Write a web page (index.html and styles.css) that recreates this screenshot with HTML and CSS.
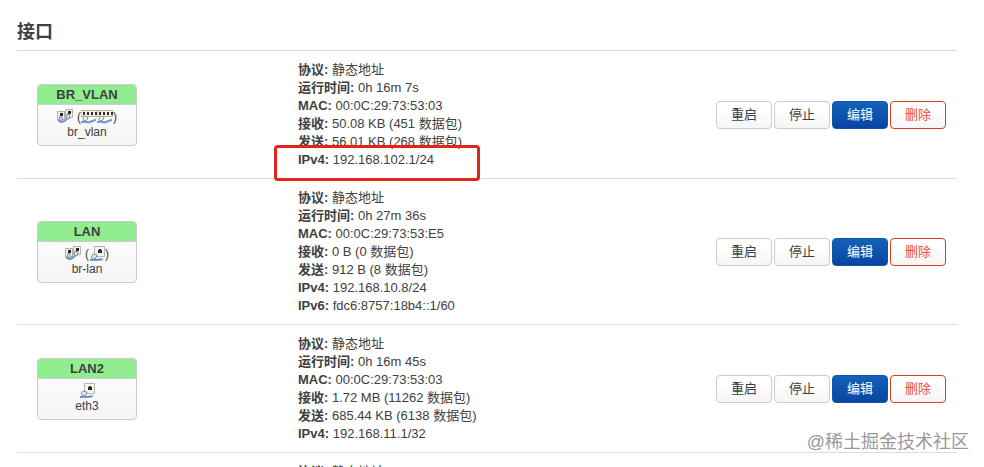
FILE: index.html
```html
<!DOCTYPE html>
<html lang="zh-CN">
<head>
<meta charset="utf-8">
<title>接口</title>
<link rel="stylesheet" href="styles.css">
</head>
<body>
<svg class="sprite" aria-hidden="true">
  <symbol id="port" viewBox="0 0 16 16">
    <path d="M5.500.5h10v10h-10z" fill="#f7f5f0" stroke="#b5b3ae"/>
    <path d="M9 4h1V3h2v1h1v3H9z" fill="#2b2927"/>
    <path d="M1 14c4-1 8 1 13-1" fill="none" stroke="#84add8" stroke-width="2"/>
    <path d="M1 14c4-1 7 1 11-1" fill="none" stroke="#4779b0"/>
    <path d="M4 8l4 1-1 3-3 1-2-2z" fill="#e4e8eb" stroke="#8b9299"/>
  </symbol>
  <symbol id="bridge" viewBox="0 0 16 16">
    <path d="M8.500.5h7v8h-7z" fill="#f2f0e9" stroke="#b3b0a9"/>
    <path d="M.5 2.500h7v8h-7z" fill="#f2f0e9" stroke="#b3b0a9"/>
    <path d="M11 2h3v3h-3zM3 4h3v3H3z" fill="#292724"/>
    <path d="M1 11c3 4 8 1 10-3" fill="none" stroke="#6d9bd0" stroke-width="2"/>
    <path d="M3 7l2 1v3l-3 1zM10 5l3 1-1 4-3-1z" fill="#e2e6e8" stroke="#858b91"/>
  </symbol>
  <symbol id="switch" viewBox="0 0 16 16">
    <path d="M0 1.500h16v6H0z" fill="#f6f2df" stroke="#b8b3a1"/>
    <path d="M2 3h2v3H2zM6 3h2v3H6zM10 3h2v3h-2zM14 3h2v3h-2z" fill="#302e29"/>
    <path d="M0 13c5-1 6 1 9 0s4-2 6-2" fill="none" stroke="#6599d2" stroke-width="2"/>
    <path d="M3 7l4 1-1 3-3 1-1-2z" fill="#f4f4ef" stroke="#92989d"/>
  </symbol>
</svg>
<main class="page">
  <h1 class="title">接口</h1>

  <section class="row">
    <div class="badge">
      <h2 class="badge-name">BR_VLAN</h2>
      <div class="badge-body">
        <div class="devices"><svg class="icon"><use href="#bridge"/></svg><span class="members">(<svg class="icon"><use href="#switch"/></svg><svg class="icon"><use href="#switch"/></svg>)</span></div>
        <div>br_vlan</div>
      </div>
    </div>
    <ul class="info">
      <li><b>协议:</b> 静态地址</li>
      <li><b>运行时间:</b> 0h 16m 7s</li>
      <li><b>MAC:</b> 00:0C:29:73:53:03</li>
      <li><b>接收:</b> 50.08 KB (451 数据包)</li>
      <li><b>发送:</b> 56.01 KB (268 数据包)</li>
      <li class="marked"><b>IPv4:</b> 192.168.102.1/24</li>
    </ul>
    <div class="actions">
      <button class="btn">重启</button><button class="btn">停止</button><button class="btn btn-edit">编辑</button><button class="btn btn-delete">删除</button>
    </div>
  </section>

  <section class="row">
    <div class="badge">
      <h2 class="badge-name">LAN</h2>
      <div class="badge-body">
        <div class="devices"><svg class="icon"><use href="#bridge"/></svg><span class="members">(<svg class="icon"><use href="#port"/></svg>)</span></div>
        <div>br-lan</div>
      </div>
    </div>
    <ul class="info">
      <li><b>协议:</b> 静态地址</li>
      <li><b>运行时间:</b> 0h 27m 36s</li>
      <li><b>MAC:</b> 00:0C:29:73:53:E5</li>
      <li><b>接收:</b> 0 B (0 数据包)</li>
      <li><b>发送:</b> 912 B (8 数据包)</li>
      <li><b>IPv4:</b> 192.168.10.8/24</li>
      <li><b>IPv6:</b> fdc6:8757:18b4::1/60</li>
    </ul>
    <div class="actions">
      <button class="btn">重启</button><button class="btn">停止</button><button class="btn btn-edit">编辑</button><button class="btn btn-delete">删除</button>
    </div>
  </section>

  <section class="row">
    <div class="badge">
      <h2 class="badge-name">LAN2</h2>
      <div class="badge-body">
        <div class="devices"><svg class="icon"><use href="#port"/></svg></div>
        <div>eth3</div>
      </div>
    </div>
    <ul class="info">
      <li><b>协议:</b> 静态地址</li>
      <li><b>运行时间:</b> 0h 16m 45s</li>
      <li><b>MAC:</b> 00:0C:29:73:53:03</li>
      <li><b>接收:</b> 1.72 MB (11262 数据包)</li>
      <li><b>发送:</b> 685.44 KB (6138 数据包)</li>
      <li><b>IPv4:</b> 192.168.11.1/32</li>
    </ul>
    <div class="actions">
      <button class="btn">重启</button><button class="btn">停止</button><button class="btn btn-edit">编辑</button><button class="btn btn-delete">删除</button>
    </div>
  </section>

  <section class="row">
    <ul class="info">
      <li><b>协议:</b> 静态地址</li>
    </ul>
  </section>
</main>
<div class="watermark">@稀土掘金技术社区</div>
</body>
</html>
```
FILE: styles.css
```css
*,
*::after {
  box-sizing: border-box;
}

body {
  position: relative;
  height: 100vh;
  margin: 0;
  overflow: hidden;
  background: #fff;
  color: #404040;
  font: 13px/18px "Liberation Sans", "Noto Sans CJK SC", sans-serif;
}

.sprite {
  display: none;
}

.page {
  padding: 14px 27px 0 17px;
}

.title {
  margin: 0;
  border-bottom: 1px solid #d6d6d6;
  font-size: 18px;
  line-height: 36px;
}

.row {
  display: grid;
  grid-template-columns: 261px 1fr auto;
  align-items: center;
  padding: 10px 11px 9px 20px;
  border-bottom: 1px solid #ddd;
}

.badge {
  width: 100px;
  overflow: hidden;
  border: 1px solid #ccc;
  border-radius: 4px;
  background: linear-gradient(#fff, #f5f5f5);
  font-size: 12px;
  line-height: 15px;
  text-align: center;
}

.badge-name {
  margin: 0;
  border-bottom: 1px solid #ccc;
  background: #90ee90;
  font-size: 13px;
  line-height: 19px;
}

.badge-body {
  padding: 4px 0 5px;
}

.devices {
  display: flex;
  justify-content: center;
  gap: 4px;
  height: 16px;
  line-height: 16px;
}

.members {
  display: flex;
}

.icon {
  width: 16px;
  height: 16px;
}

.info {
  grid-column: 2;
  margin: 0;
  padding: 0;
  list-style: none;
}

.info li {
  height: 18px;
}

.marked {
  position: relative;
}

.marked::after {
  content: "";
  position: absolute;
  top: -6px;
  left: -24px;
  width: 206px;
  height: 36px;
  border: 3px solid #e1251b;
  border-radius: 4px;
}

.actions {
  display: flex;
  gap: 2px;
}

.btn {
  width: 56px;
  height: 28px;
  padding: 0;
  border: 1px solid #ccc;
  border-radius: 4px;
  background: linear-gradient(#fff 25%, #f5f5f5);
  color: #404040;
  font: inherit;
}

.btn-edit {
  border-color: #1156ad;
  background: linear-gradient(#1362b8, #0a45a0);
  color: #fff;
}

.btn-delete {
  border-color: #d04022;
  color: #ee5042;
}

.watermark {
  position: absolute;
  right: 15px;
  bottom: 13px;
  color: #999;
  font-size: 18px;
  line-height: 24px;
}
```
